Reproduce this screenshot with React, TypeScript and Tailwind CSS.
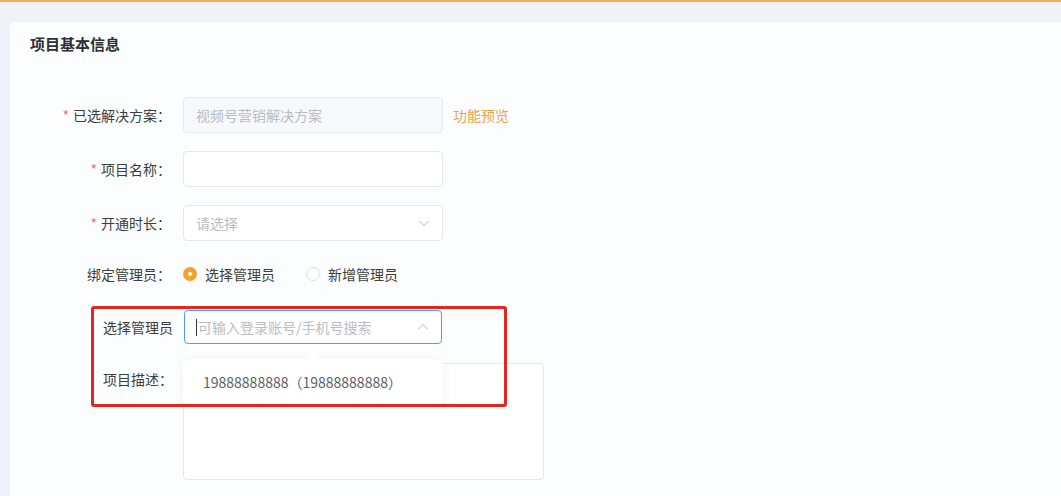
import React from 'react';

function Star() {
  return <span className="text-[#f56c6c] mr-[4px]">*</span>;
}

function Chevron({ up }: { up?: boolean }) {
  return (
    <svg width="12" height="12" viewBox="0 0 12 12" className="text-[#b4b8bf]">
      <polyline
        points={up ? '1.5,8 6,3.5 10.5,8' : '1.5,4 6,8.5 10.5,4'}
        fill="none"
        stroke="currentColor"
        strokeWidth="1"
      />
    </svg>
  );
}

function Row({ label, required, children, className }: { label: string; required?: boolean; children: React.ReactNode; className?: string }) {
  return (
    <div className={`flex items-start ${className ?? ''}`}>
      <div className="w-[173px] pr-[12px] text-right leading-[36px] text-[14px] text-[#3d3d3d]">
        {required && <Star />}
        {label}
      </div>
      {children}
    </div>
  );
}

export default function App() {
  return (
    <div className="relative h-[496px] w-full overflow-hidden bg-[#eff2f8] border-t-2 border-[#f2a95a] pt-[20px] pl-[10px] font-['Noto_Sans_CJK_SC',sans-serif]">
      <div className="h-full bg-[#fcfdfe] rounded-tl-[4px]">
        <div className="h-[44px] flex items-center pl-[20px] text-[15px] font-bold text-[#2b2f36]">项目基本信息</div>

        <div className="pt-[31px]">
          <Row label="已选解决方案：" required className="mb-[18px]">
            <div className="w-[260px] h-[36px] rounded-[4px] border border-[#e6e9ef] bg-[#f6f8fb] px-[12px] flex items-center text-[14px] text-[#b9bcc3]">
              视频号营销解决方案
            </div>
            <span className="ml-[10px] leading-[36px] text-[14px] text-[#f1a043]">功能预览</span>
          </Row>

          <Row label="项目名称：" required className="mb-[18px]">
            <div className="w-[260px] h-[36px] rounded-[4px] border border-[#e4e7ed] bg-white" />
          </Row>

          <Row label="开通时长：" required className="mb-[15px]">
            <div className="w-[260px] h-[36px] rounded-[4px] border border-[#e4e7ed] bg-white px-[12px] flex items-center justify-between text-[14px] text-[#b9bcc3]">
              <span>请选择</span>
              <Chevron />
            </div>
          </Row>

          <Row label="绑定管理员：" className="mb-[18px]">
            <div className="flex items-center h-[36px] text-[14px] text-[#3d3d3d]">
              <span className="w-[14px] h-[14px] rounded-full bg-[#f5a02f] flex items-center justify-center">
                <span className="w-[4px] h-[4px] rounded-full bg-white" />
              </span>
              <span className="ml-[8px]">选择管理员</span>
              <span className="ml-[31px] w-[14px] h-[14px] rounded-full border border-[#dcdfe6] bg-white" />
              <span className="ml-[8px]">新增管理员</span>
            </div>
          </Row>

          <div className="flex items-start mb-[19px]">
            <div className="w-[174px] pl-[93px] leading-[34px] text-[14px] text-[#3d3d3d]">选择管理员</div>
            <div className="w-[258px] h-[34px] rounded-[4px] border border-[#4a9ff5] bg-white pl-[11px] pr-[12px] flex items-center justify-between text-[14px] text-[#b9bcc3]">
              <span className="flex items-center">
                <span className="w-px h-[17px] bg-[#333] mr-px" />
                可输入登录账号/手机号搜索
              </span>
              <Chevron up />
            </div>
          </div>

          <div className="flex items-start">
            <div className="w-[173px] pl-[93px] pt-[6px] leading-[20px] text-[14px] text-[#3d3d3d]">项目描述：</div>
            <div className="w-[361px] h-[117px] rounded-[4px] border border-[#e4e7ed] bg-white" />
          </div>
        </div>
      </div>

      <div className="absolute left-[183px] top-[357px] w-[260px] h-[46px] bg-white rounded-[4px] shadow-[0_2px_12px_rgba(0,0,0,0.06)] py-[6px]">
        <div className="absolute -top-[5px] left-[125px] w-[10px] h-[10px] rotate-45 bg-white" />
        <div className="relative h-[34px] flex items-center px-[20px] text-[14px] text-[#5c5f66]">19888888888（19888888888）</div>
      </div>

      <div className="absolute left-[91px] top-[304px] w-[416px] h-[101px] border-[3px] border-[#e3261f] rounded-[3px]" />
    </div>
  );
}
